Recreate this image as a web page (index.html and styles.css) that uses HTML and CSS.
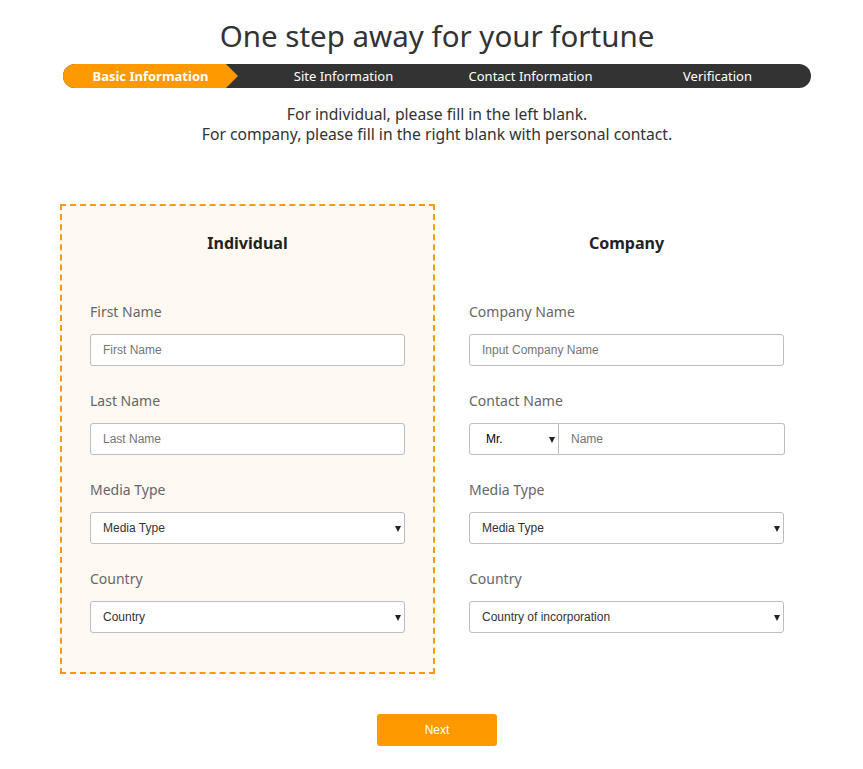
FILE: index.html
```html
<!DOCTYPE html>
<html lang="en">
<head>
<meta charset="utf-8">
<title>One step away for your fortune</title>
<link rel="stylesheet" href="styles.css">
</head>
<body>
<div class="page">
  <h1 class="title">One step away for your fortune</h1>
  <div class="steps">
    <div class="step"><span class="step-active">Basic Information</span></div>
    <div class="step">Site Information</div>
    <div class="step">Contact Information</div>
    <div class="step">Verification</div>
  </div>
  <p class="intro">For individual, please fill in the left blank.<br>For company, please fill in the right blank with personal contact.</p>

  <div class="columns">
    <div class="panel panel-selected">
      <h2 class="panel-title">Individual</h2>
      <div class="field">
        <label class="label">First Name</label>
        <input class="input" type="text" placeholder="First Name">
      </div>
      <div class="field">
        <label class="label">Last Name</label>
        <input class="input" type="text" placeholder="Last Name">
      </div>
      <div class="field">
        <label class="label">Media Type</label>
        <div class="select-wrap"><select class="input select placeholder"><option>Media Type</option></select></div>
      </div>
      <div class="field">
        <label class="label">Country</label>
        <div class="select-wrap"><select class="input select placeholder"><option>Country</option></select></div>
      </div>
    </div>

    <div class="panel">
      <h2 class="panel-title">Company</h2>
      <div class="field">
        <label class="label">Company Name</label>
        <input class="input" type="text" placeholder="Input Company Name">
      </div>
      <div class="field">
        <label class="label">Contact Name</label>
        <div class="combo">
          <div class="select-wrap combo-title"><select class="input select title-select"><option>Mr.</option></select></div>
          <input class="input combo-name" type="text" placeholder="Name">
        </div>
      </div>
      <div class="field">
        <label class="label">Media Type</label>
        <div class="select-wrap"><select class="input select placeholder"><option>Media Type</option></select></div>
      </div>
      <div class="field">
        <label class="label">Country</label>
        <div class="select-wrap"><select class="input select placeholder"><option>Country of incorporation</option></select></div>
      </div>
    </div>
  </div>

  <div class="actions">
    <button class="next-btn" type="button">Next</button>
  </div>
</div>
</body>
</html>
```

FILE: styles.css
```css
* { box-sizing: border-box; }

body {
  margin: 0;
  background: #fff;
  font-family: "Noto Sans", "Open Sans", sans-serif;
  color: #333;
}

.page {
  width: 863px;
  padding: 14px 0 0;
}

.title {
  margin: 0;
  padding-left: 11px;
  text-align: center;
  font-size: 29.5px;
  font-weight: 400;
  line-height: 44px;
  color: #333;
}

.steps {
  display: flex;
  margin: 6px 52px 0 63px;
  height: 24px;
  background: #333;
  border-radius: 12px;
  overflow: hidden;
}

.step {
  flex: 1;
  display: flex;
  align-items: center;
  justify-content: center;
  color: #fff;
  font-size: 13px;
}

.step:first-child { justify-content: flex-start; }

.step-active {
  display: flex;
  align-items: center;
  justify-content: center;
  width: 175px;
  height: 100%;
  background: #f90;
  font-weight: 700;
  clip-path: polygon(0 0, 163px 0, 175px 50%, 163px 100%, 0 100%);
}

.intro {
  margin: 16px 0 0;
  padding-left: 11px;
  text-align: center;
  font-size: 15.7px;
  line-height: 20px;
  color: #333;
}

.columns {
  display: flex;
  gap: 4px;
  margin: 60px 0 0 60px;
}

.panel {
  width: 375px;
  height: 470px;
  padding: 0 28px;
  border: 2px dashed transparent;
}

.panel-selected {
  border-color: #f90;
  background: #fff9f1;
}

.panel-title {
  margin: 24px 0 0;
  text-align: center;
  font-size: 16px;
  font-weight: 700;
  line-height: 26px;
  color: #222;
}

.panel-title + .field { margin-top: 46px; }

.field {
  display: flex;
  flex-direction: column;
  margin-top: 25px;
}

.label {
  font-size: 14px;
  line-height: 20px;
  color: #666;
  margin-bottom: 12px;
}

.input {
  width: 315px;
  height: 32px;
  padding: 0 12px;
  border: 1px solid #bbbdc4;
  border-radius: 3px;
  background: #fff;
  font-family: "Liberation Sans", Arial, sans-serif;
  font-size: 12px;
  color: #000;
  outline: none;
}

.input::placeholder { color: #757575; }

.select {
  -webkit-appearance: none;
  appearance: none;
  padding: 0 20px 0 12px;
}

.select.placeholder { color: #333; }

.select-wrap {
  position: relative;
  width: 315px;
}

.select-wrap::after {
  content: "";
  position: absolute;
  right: 4px;
  top: 14px;
  border-left: 3px solid transparent;
  border-right: 3px solid transparent;
  border-top: 6px solid #222;
  pointer-events: none;
}

.combo {
  display: flex;
  width: 316px;
}

.combo-title { width: 90px; }

.title-select {
  width: 90px;
  border-radius: 3px 0 0 3px;
  padding-left: 16px;
  color: #000;
}

.combo-name {
  width: 226px;
  border-left: none;
  border-radius: 0 3px 3px 0;
}

.actions {
  display: flex;
  justify-content: center;
  margin-top: 40px;
  padding-left: 11px;
}

.next-btn {
  width: 120px;
  height: 32px;
  border: none;
  border-radius: 3px;
  background: #f90;
  color: #fff;
  font-family: "Liberation Sans", Arial, sans-serif;
  font-size: 12px;
}
```
